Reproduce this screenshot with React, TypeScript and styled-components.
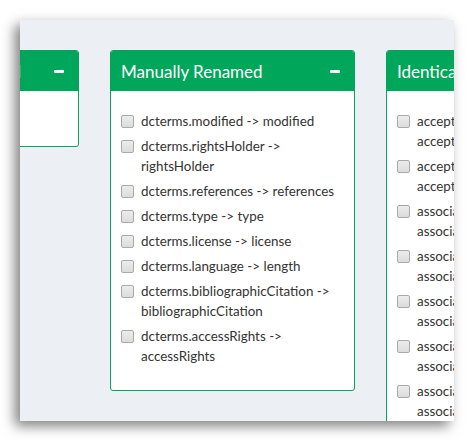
import * as React from "react"
import styled, { createGlobalStyle } from "styled-components"

const GlobalStyle = createGlobalStyle`
  html, body {
    margin: 0;
    padding: 0;
    background: #ffffff;
  }
  body {
    font-family: Lato, "Liberation Sans", sans-serif;
  }
`

interface IPanel {
  title: string
  items: string[][]
}

const panels: IPanel[] = [
  { title: "Automatically Renamed", items: [] },
  {
    title: "Manually Renamed",
    items: [
      ["dcterms.modified -> modified"],
      ["dcterms.rightsHolder ->", "rightsHolder"],
      ["dcterms.references -> references"],
      ["dcterms.type -> type"],
      ["dcterms.license -> license"],
      ["dcterms.language -> length"],
      ["dcterms.bibliographicCitation ->", "bibliographicCitation"],
      ["dcterms.accessRights ->", "accessRights"],
    ],
  },
  {
    title: "Identical",
    items: [
      ["acceptedNameUsage ->", "acceptedNameUsage"],
      ["acceptedNameUsageID ->", "acceptedNameUsageID"],
      ["associatedMedia ->", "associatedMedia"],
      ["associatedOccurrences ->", "associatedOccurrences"],
      ["associatedReferences ->", "associatedReferences"],
      ["associatedSequences ->", "associatedSequences"],
      ["associatedTaxa ->", "associatedTaxa"],
    ],
  },
]

const App: React.FunctionComponent = () => {
  return (
    <Page>
      <GlobalStyle />
      <Frame>
        <Track>
          {panels.map((p, i) => (
            <Box key={i}>
              <Header>
                <Title>{p.title}</Title>
                <Collapse />
              </Header>
              <Body $empty={p.items.length === 0}>
                {p.items.map((lines, j) => (
                  <Row key={j}>
                    <Check />
                    <Label>
                      {lines.map((l, k) => (
                        <span key={k}>{l}</span>
                      ))}
                    </Label>
                  </Row>
                ))}
              </Body>
            </Box>
          ))}
        </Track>
      </Frame>
    </Page>
  )
}

const Page = styled.div`
  width: 474px;
  height: 441px;
  padding: 20px 20px 0 20px;
  box-sizing: border-box;
`

const Frame = styled.div`
  width: 434px;
  height: 401px;
  background: #ecf0f5;
  overflow: hidden;
  box-shadow: -5px 5px 12px rgba(0, 0, 0, 0.5);
`

const Track = styled.div`
  display: flex;
  align-items: flex-start;
  gap: 31px;
  padding-top: 30px;
  margin-left: -186px;
`

const Box = styled.section`
  flex: 0 0 245px;
  box-sizing: border-box;
  border: 1px solid #00a65a;
  border-radius: 3px;
  background: #ffffff;
  overflow: hidden;
`

const Header = styled.header`
  height: 40px;
  background: #00a65a;
  color: #ffffff;
  display: flex;
  align-items: center;
  justify-content: space-between;
  padding: 0 14px 0 10px;
  box-sizing: border-box;
`

const Title = styled.h3`
  margin: 0;
  font-size: 17px;
  font-weight: normal;
  white-space: nowrap;
`

const Collapse = styled.span`
  width: 10px;
  height: 3px;
  background: #ffffff;
  border-radius: 1px;
`

const Body = styled.div<{ $empty: boolean }>`
  height: ${(p) => (p.$empty ? "55px" : "auto")};
  padding: 20px 10px 24px 10px;
  box-sizing: border-box;
  display: flex;
  flex-direction: column;
  gap: 5px;
`

const Row = styled.label`
  display: flex;
  align-items: flex-start;
  gap: 7px;
  font-size: 13.4px;
  line-height: 20px;
  color: #333333;
`

const Check = styled.span`
  flex: 0 0 auto;
  width: 11px;
  height: 11px;
  margin-top: 4px;
  border: 1px solid #a9a9a9;
  border-radius: 2px;
  background: linear-gradient(#ececec, #dcdcdc);
`

const Label = styled.span`
  display: flex;
  flex-direction: column;
  white-space: nowrap;
`

export default App
